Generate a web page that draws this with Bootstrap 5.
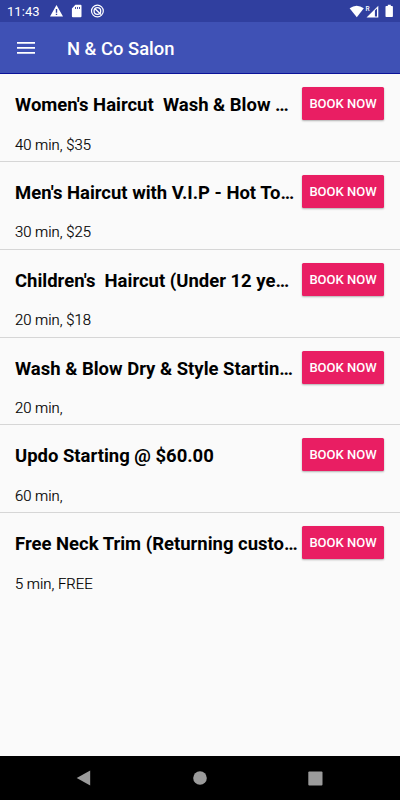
<!DOCTYPE html>
<html lang="en">
<head>
<meta charset="utf-8">
<meta name="viewport" content="width=device-width, initial-scale=1">
<title>N &amp; Co Salon</title>
<link href="https://cdn.jsdelivr.net/npm/bootstrap@5.3.0/dist/css/bootstrap.min.css" rel="stylesheet">
<style>
body{font-family:Roboto,sans-serif;background:#fafafa;color:#000;height:100vh;overflow:hidden}
.status{height:22px;background:#303f9f;color:#fff;font-size:13px;line-height:22px;padding:0 5px 0 7px}
.status svg,.app svg,.keys svg{display:block;flex:none}
.clock{width:42px;letter-spacing:.05px;padding-top:1px}
.app{height:52px;background:#3f51b5;border-bottom:1px solid #0a1299;padding:0 17px;color:#fff}
.app h1{font-size:18.4px;font-weight:500;line-height:24px;margin:2px 0 0 32px;white-space:nowrap}
.services{padding-top:.2px}
.service{height:87.8px;border:0;border-bottom:1px solid #d6d6d6;border-radius:0;background:transparent;padding:13px 16px 0 15px;color:#000}
.service:last-child{border-bottom:0}
.title{font-size:18.48px;font-weight:700;line-height:36px;height:34px;white-space:pre;margin:0}
.info{font-size:14.85px;font-weight:300;-webkit-text-stroke:.2px #000;line-height:20px;margin-top:13.5px;color:#000}
.book{width:82px;height:33px;flex:none;background:#e91e63;color:#fff;border:0;border-radius:1.5px;padding:0;font-size:13px;font-weight:500;line-height:34px;box-shadow:0 1px 2px rgba(0,0,0,.3);white-space:nowrap}
.book:hover{background:#d81b60;color:#fff}
.keys{height:44px;background:#000;padding:0 77px 0 76px}
</style>
<script src="https://cdn.jsdelivr.net/npm/bootstrap@5.3.0/dist/js/bootstrap.bundle.min.js"></script>
</head>
<body class="d-flex flex-column m-0">
<div class="status d-flex align-items-center flex-shrink-0">
  <span class="clock">11:43</span>
  <svg width="14" height="14" viewBox="0 0 14 14"><path fill="#fff" fill-rule="evenodd" d="M7.5 1 14 12.4H1ZM6.8 5v3.8h1.4V5ZM6.8 9.7V11h1.4V9.7Z"/></svg>
  <svg class="ms-2" width="11" height="14" viewBox="0 0 11 14"><path fill="#fff" fill-rule="evenodd" d="M4.4.8h5.1q1 0 1 1v10.4q0 1-1 1H1.9q-1 0-1-1V4.5ZM4 2.9v2h.9v-2ZM6 2.9v2h.9v-2ZM8 2.9v2h.9v-2Z"/></svg>
  <svg class="ms-2" width="14" height="14" viewBox="0 0 14 14" fill="none" stroke="#fff"><circle cx="7.4" cy="7" r="5.9" stroke-width="1.2"/><circle cx="7.4" cy="7" r="3.3" stroke-width="1.3"/><path stroke-width="1.4" d="m5 4.7 6 5.7"/></svg>
  <svg class="ms-auto" width="15" height="13" viewBox="0 0 15 13"><path fill="#fff" d="M.6 3.3Q7.7-1.8 14.8 3.3L7.8 12.2Z"/></svg>
  <svg width="16" height="15" viewBox="0 0 16 15"><text x="1.6" y="6.5" font-family="Roboto,sans-serif" font-size="6.5" font-weight="500" fill="#fff">R</text><path fill="#fff" fill-rule="evenodd" d="M14.3 1.7V13.5H2.5ZM10.9 6.5V12.5H13V4.5Z"/></svg>
  <svg width="15" height="14" viewBox="0 0 15 14"><path fill="#fff" d="M7.8.8h3V2h1.3q.8 0 .8.8v9.4q0 .8-.8.8H6.3q-.8 0-.8-.8V2.8Q5.5 2 6.3 2h1.5Z"/></svg>
</div>
<header class="app d-flex align-items-center flex-shrink-0">
  <svg width="18" height="12" viewBox="0 0 18 12"><path fill="#fff" d="M0 .1h18v1.7H0zM0 5.1h18v1.7H0zM0 10.1h18v1.7H0z"/></svg>
  <h1>N &amp; Co Salon</h1>
</header>
<main class="services list-group list-group-flush flex-grow-1">
  <div class="list-group-item service"><div class="d-flex justify-content-between"><h2 class="title">Women's Haircut  Wash &amp; Blow …</h2><button class="btn book">BOOK NOW</button></div><div class="info">40 min, $35</div></div>
  <div class="list-group-item service"><div class="d-flex justify-content-between"><h2 class="title">Men's Haircut with V.I.P - Hot To…</h2><button class="btn book">BOOK NOW</button></div><div class="info">30 min, $25</div></div>
  <div class="list-group-item service"><div class="d-flex justify-content-between"><h2 class="title">Children's  Haircut (Under 12 ye…</h2><button class="btn book">BOOK NOW</button></div><div class="info">20 min, $18</div></div>
  <div class="list-group-item service"><div class="d-flex justify-content-between"><h2 class="title">Wash &amp; Blow Dry &amp; Style Startin…</h2><button class="btn book">BOOK NOW</button></div><div class="info">20 min,</div></div>
  <div class="list-group-item service"><div class="d-flex justify-content-between"><h2 class="title">Updo Starting @ $60.00</h2><button class="btn book">BOOK NOW</button></div><div class="info">60 min,</div></div>
  <div class="list-group-item service"><div class="d-flex justify-content-between"><h2 class="title">Free Neck Trim (Returning custo…</h2><button class="btn book">BOOK NOW</button></div><div class="info">5 min, FREE</div></div>
</main>
<nav class="keys d-flex align-items-center justify-content-between flex-shrink-0" aria-label="System navigation">
  <svg width="15" height="16" viewBox="0 0 15 16"><path fill="#9b9b9b" d="M14.2.5v15L.7 8Z"/></svg>
  <svg width="14" height="14" viewBox="0 0 14 14"><circle cx="7" cy="7" r="6.8" fill="#9b9b9b"/></svg>
  <svg width="15" height="15" viewBox="0 0 15 15"><rect x=".3" y=".5" width="14.2" height="14" rx="1" fill="#9b9b9b"/></svg>
</nav>
</body>
</html>
